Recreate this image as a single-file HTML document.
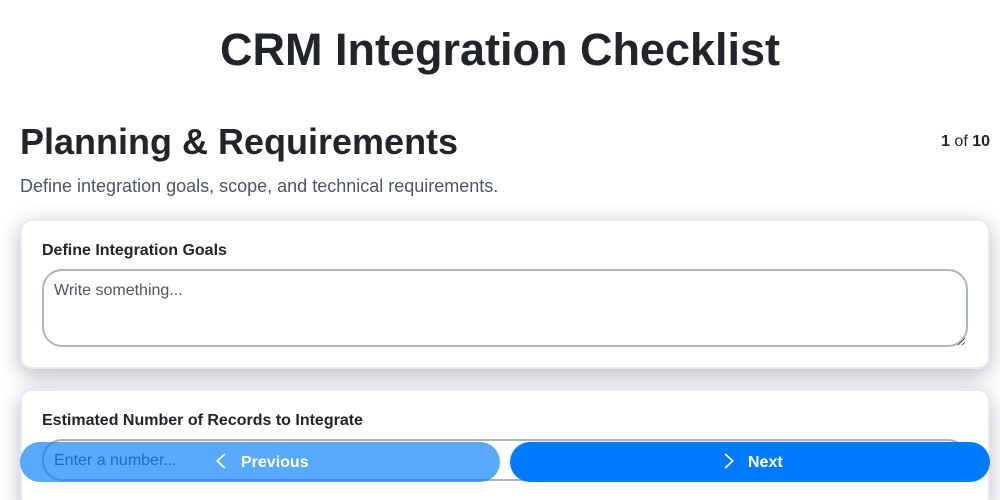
<!DOCTYPE html>
<html><head><meta charset="utf-8">
<style>
*{box-sizing:border-box}
html,body{margin:0;padding:0;width:1000px;height:500px;overflow:hidden;background:#fff;font-family:Arial,"Liberation Sans",sans-serif;color:#212529}
#w{position:relative;width:1000px;height:500px;overflow:hidden;background:#fff}
h1{position:absolute;left:0;width:1000px;top:22px;margin:0;text-align:center;font-size:45px;line-height:55px;font-weight:700}
h2{position:absolute;left:20px;top:121px;margin:0;font-size:36px;line-height:42px;font-weight:700}
.count{position:absolute;right:10px;top:133px;font-size:16px;line-height:18px}
.desc{position:absolute;left:20px;top:176px;font-size:18px;line-height:21px;color:#4a5568}
.card{position:absolute;left:20px;width:970px;background:#fff;border:2px solid #e9e9f0;border-radius:12px;box-shadow:0 6px 22px rgba(40,40,70,.32)}
.c1{top:219px;height:150px}
.c2{top:389px;height:119px}
.lab{position:absolute;left:42px;font-size:16px;line-height:18px;font-weight:700;color:#212529}
.field{position:absolute;left:42px;width:926px;border:2px solid #adb5bd;border-radius:20px;background:#fff;font-size:16px;line-height:18px;color:#4a5568;padding:11px 10px}
.btn{position:absolute;top:442px;height:40px;border-radius:20px}
.prev{left:20px;width:480px;background:#007bff;opacity:.65}
.next{left:510px;width:480px;background:#007bff}
.t{position:absolute;top:443px;height:40px;line-height:39px;color:#fff;font-size:16px;font-weight:700}
svg{position:absolute}
</style></head><body><div id="w">
<h1>CRM Integration Checklist</h1>
<h2>Planning &amp; Requirements</h2>
<div class="count"><b>1</b> of <b>10</b></div>
<div class="desc">Define integration goals, scope, and technical requirements.</div>
<div class="card c1"></div>
<div class="lab" style="top:242px">Define Integration Goals</div>
<div class="field" style="top:269px;height:78px">Write something...</div>
<svg style="left:957px;top:337px" width="9" height="9" viewBox="0 0 9 9"><path d="M1 8L8 1M5 8L8 5" stroke="#555" stroke-width="1" fill="none"/></svg>
<div class="card c2"></div>
<div class="lab" style="top:412px">Estimated Number of Records to Integrate</div>
<div class="field" style="top:439px;height:42px">Enter a number...</div>
<div class="btn prev"></div>
<div class="btn next"></div>
<svg style="left:212px;top:451px" width="18" height="20" viewBox="0 0 18 20"><path d="M12.8 3L5.3 10L12.8 17" stroke="#fff" stroke-width="1.7" fill="none"/></svg>
<div class="t" style="left:241px">Previous</div>
<svg style="left:720px;top:451px" width="18" height="20" viewBox="0 0 18 20"><path d="M5.2 3L12.7 10L5.2 17" stroke="#fff" stroke-width="1.7" fill="none"/></svg>
<div class="t" style="left:748px">Next</div>
</div></body></html>
